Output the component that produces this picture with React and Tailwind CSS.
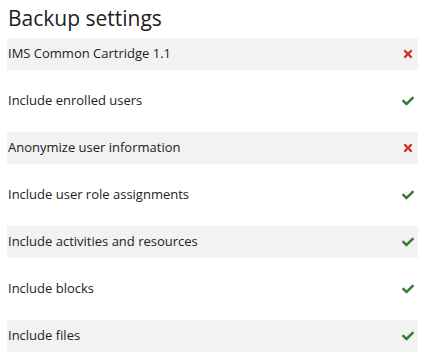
import React from 'react';
import { FaCheck, FaTimes } from 'react-icons/fa';

const settings = [
  { label: 'IMS Common Cartridge 1.1', on: false },
  { label: 'Include enrolled users', on: true },
  { label: 'Anonymize user information', on: false },
  { label: 'Include user role assignments', on: true },
  { label: 'Include activities and resources', on: true },
  { label: 'Include blocks', on: true },
  { label: 'Include files', on: true },
];

export default function App() {
  return (
    <div className="min-h-screen bg-white px-[7px] pt-[2px] text-[#1d2125]" style={{ fontFamily: '"Open Sans", "Noto Sans", sans-serif' }}>
      <h2 className="text-[21px] leading-[32px] mb-[4px] pl-px">Backup settings</h2>
      <div className="flex flex-col gap-[15px]">
        {settings.map((s, i) => (
          <div
            key={s.label}
            className={`flex items-center justify-between h-[32px] pl-px pr-[4px] ${i % 2 === 0 ? 'bg-[#f2f2f2]' : ''}`}
          >
            <span className="text-[13px]">{s.label}</span>
            {s.on ? (
              <FaCheck className="w-[12px] h-[12px] text-[#357a32]" />
            ) : (
              <FaTimes className="w-[12px] h-[12px] text-[#ca3120]" />
            )}
          </div>
        ))}
      </div>
    </div>
  );
}
